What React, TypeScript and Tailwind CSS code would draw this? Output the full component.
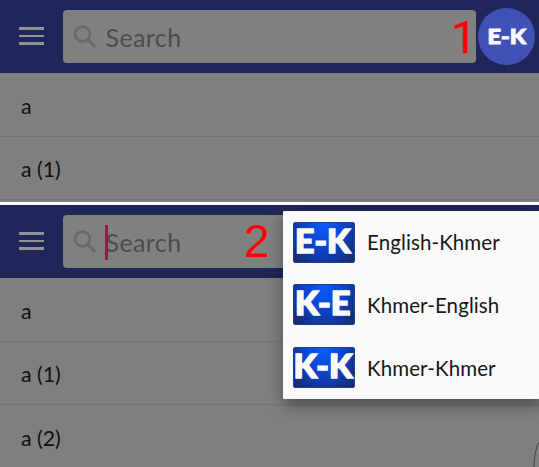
import React from 'react';

const hand = "font-['Lato','Open_Sans',sans-serif]";

function Header({ full, cursor }: { full?: boolean; cursor?: boolean }) {
  return (
    <header className="flex h-[73px] w-full shrink-0 items-start bg-[#1f275a]">
      <div className="ml-[19px] mt-[27px] flex w-[25px] flex-col gap-[5px]">
        <span className="h-[2.5px] bg-[#929294]" />
        <span className="h-[2.5px] bg-[#929294]" />
        <span className="h-[2.5px] bg-[#929294]" />
      </div>
      <div className="ml-[19px] mt-[10px] flex h-[53px] w-[413px] items-center rounded-[4px] bg-[#808080]">
        <svg className="ml-[10px] h-[24px] w-[24px] shrink-0" viewBox="0 0 24 24" fill="none" stroke="#696969" strokeWidth="2.7">
          <circle cx="9.5" cy="9" r="7.4" />
          <path d="M14.8 14.3L22.2 21.8" strokeWidth="3.2" />
        </svg>
        <span className="relative ml-[8.5px] flex">
          {cursor && <span className="absolute left-[-0.5px] top-[-1px] h-[35px] w-[3px] bg-[#8e2047]" />}
          <span className={`${hand} text-[25px] leading-[32px] tracking-[0.4px] text-[#4b4b4b]`}>Search</span>
        </span>
        {full ? (
          <span className="ml-auto mr-[-0.5px] pt-[3px] font-['Roboto',sans-serif] text-[45px] leading-[50px] text-[#ff0000] [-webkit-text-stroke:0.4px_#ff0000]">1</span>
        ) : (
          <span className="ml-[62.5px] font-['Liberation_Sans',sans-serif] text-[46px] leading-[53px] text-[#ff0000]">2</span>
        )}
      </div>
      {full && (
        <div className="ml-[2px] mt-[8px] flex h-[57px] w-[57px] items-center justify-center rounded-full bg-[#4051b5]">
          <svg className="h-[28px] w-[50px] overflow-visible" viewBox="0 0 50 28">
            <BadgeText text="E-K" x={5.5} y={20.5} width={38.5} size={21} stroke={1} />
          </svg>
        </div>
      )}
    </header>
  );
}

function BadgeText({ text, x, y, width, size, stroke }: { text: string; x: number; y: number; width: number; size: number; stroke: number }) {
  return (
    <text
      x={x}
      y={y}
      textLength={width}
      lengthAdjust="spacingAndGlyphs"
      fontFamily="Lato, 'Open Sans', sans-serif"
      fontWeight="900"
      fontSize={size}
      fill="#fafafa"
      stroke="#fafafa"
      strokeWidth={stroke}
    >
      {text}
    </text>
  );
}

function Row({ label }: { label: string }) {
  return (
    <div className={`${hand} flex h-[63.5px] shrink-0 items-center border-b border-[#747474] pl-[21px] pt-[5px] text-[21.3px] text-[#101010]`}>
      {label}
    </div>
  );
}

function MenuItem({ code, label }: { code: string; label: string }) {
  const wide = code === 'K-K';
  return (
    <div className="flex h-[62.6px] items-center pl-[10px]">
      <div className="h-[41px] w-[62px] rounded-[2px] border border-[#1b3d9c] bg-[radial-gradient(ellipse_at_50%_0%,#0b5cff_0%,#0d45cf_45%,#15307f_85%,#1a2c64_100%)]">
        <svg className="h-[39px] w-[60px] overflow-visible" viewBox="0 0 60 39">
          <BadgeText text={code} x={wide ? -0.5 : 1} y={30} width={wide ? 59 : 55.5} size={32.5} stroke={1.5} />
        </svg>
      </div>
      <span className={`${hand} ml-[12px] pt-[1px] text-[20.5px] tracking-[0.1px] text-[#171717]`}>{label}</span>
    </div>
  );
}

export default function App() {
  return (
    <div className="relative flex h-[467px] w-[539px] flex-col overflow-hidden bg-[#7f7f7f]">
      <section className="flex h-[202px] shrink-0 flex-col overflow-hidden">
        <Header full />
        <Row label="a" />
        <Row label="a (1)" />
      </section>
      <div className="h-[3px] shrink-0 bg-white" />
      <section className="flex h-[262px] shrink-0 flex-col overflow-hidden">
        <Header cursor />
        <Row label="a" />
        <Row label="a (1)" />
        <Row label="a (2)" />
      </section>
      <div className="absolute left-[283px] top-[211px] h-[188px] w-[260px] rounded-[1px] bg-[#fafafa] shadow-[0_6px_16px_rgba(0,0,0,0.4)]">
        <MenuItem code="E-K" label="English-Khmer" />
        <MenuItem code="K-E" label="Khmer-English" />
        <MenuItem code="K-K" label="Khmer-Khmer" />
      </div>
      <svg className="absolute bottom-0 right-0 h-[27px] w-[6px]" viewBox="0 0 6 27" fill="none" stroke="#444" strokeWidth="1">
        <path d="M1 27C1.2 16 3 8 6 2" />
      </svg>
    </div>
  );
}
